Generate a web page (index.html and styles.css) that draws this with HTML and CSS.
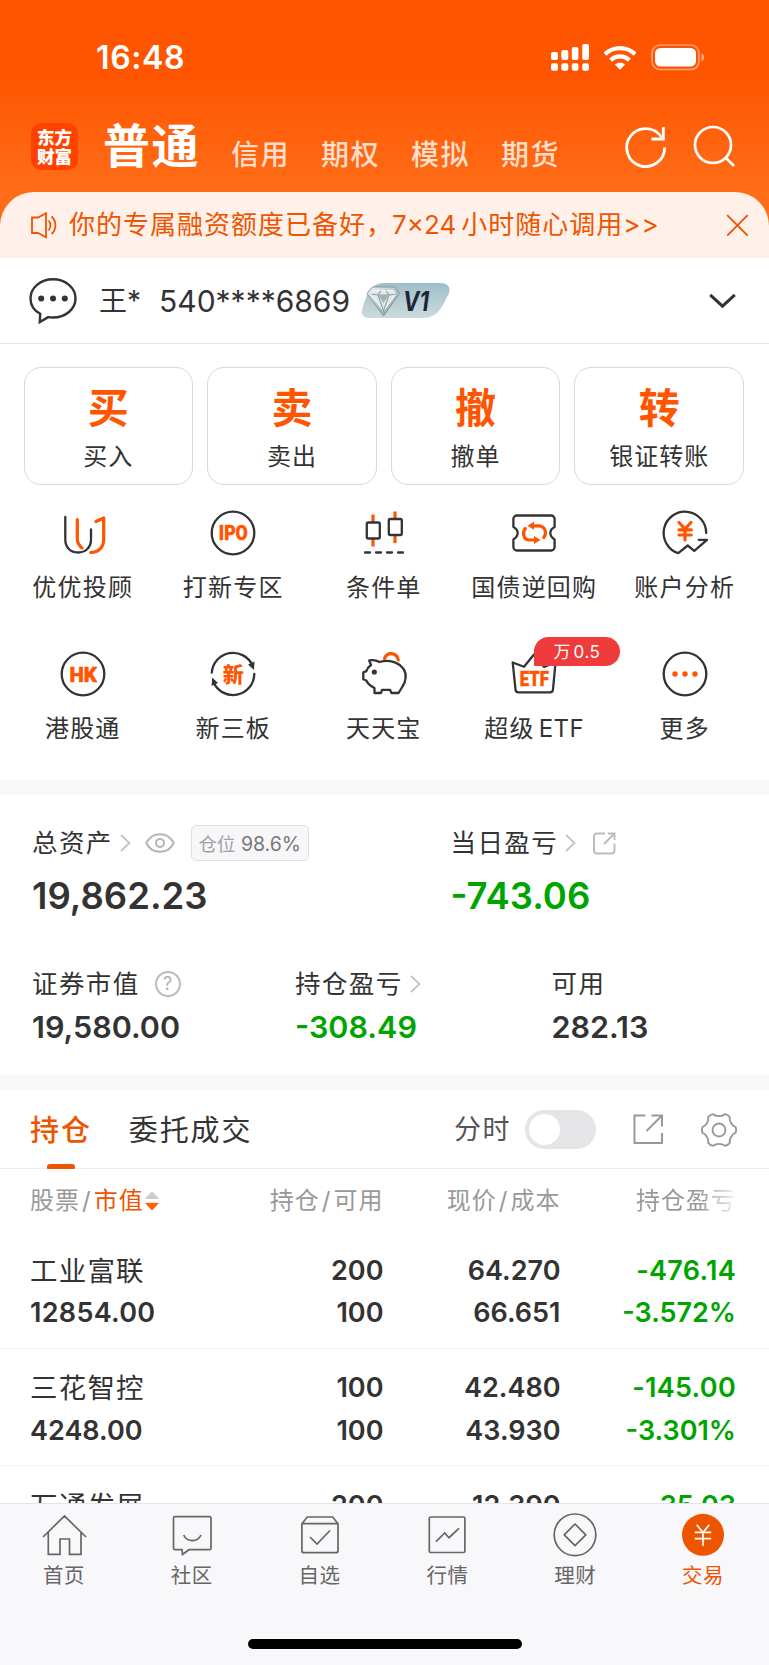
FILE: index.html
```html
<!DOCTYPE html>
<html lang="zh-CN">
<head>
<meta charset="utf-8">
<title>交易</title>
<link rel="stylesheet" href="styles.css">
</head>
<body>
<div class="app">
  <header class="top">
    <div class="status">
      <span class="clock">16:48</span>
      <div class="status-icons">
        <svg class="signal" width="39" height="28" viewBox="0 0 39 28" fill="#fff"><rect x="0" y="8" width="7" height="8" rx="2"/><rect x="10.3" y="6" width="7" height="10" rx="2"/><rect x="20.8" y="3" width="6.6" height="13" rx="2"/><rect x="31.2" y="0" width="6.8" height="16" rx="2"/><rect x="0" y="19.3" width="7" height="7.5" rx="2"/><rect x="10.3" y="19.3" width="7" height="7.5" rx="2"/><rect x="20.8" y="19.3" width="6.6" height="7.5" rx="2"/><rect x="31.2" y="19.3" width="6.8" height="7.5" rx="2"/></svg>
        <svg class="wifi" width="34" height="26" viewBox="0 0 34 26"><g fill="none" stroke="#fff" stroke-width="4.3"><path d="M2 9.2C10.500 1.200 23.500 1.200 32 9.200"/><path d="M7.600 15.200C13 10.200 21 10.200 26.400 15.200"/></g><path d="M17 24.800l-5.200-5.200c3-2.500 7.400-2.500 10.400 0z" fill="#fff"/></svg>
        <svg class="battery" width="54" height="27" viewBox="0 0 54 27"><rect x="1" y="1" width="47" height="24.500" rx="8" fill="none" stroke="#fff" stroke-opacity=".45" stroke-width="1.600"/><rect x="4" y="4" width="41" height="18.500" rx="5.500" fill="#fff"/><path d="M50.500 9.500c3.600 1.200 3.600 6.600 0 7.800z" fill="#fff" fill-opacity=".5"/></svg>
      </div>
    </div>
    <nav class="modes">
      <div class="logo"><span>东方</span><span>财富</span></div>
      <a class="mode mode-active">普通</a>
      <a class="mode">信用</a>
      <a class="mode">期权</a>
      <a class="mode">模拟</a>
      <a class="mode">期货</a>
      <div class="mode-tools">
        <svg width="42" height="44" viewBox="0 0 42 44" fill="none" stroke="#fff" stroke-width="2.800"><path d="M39.700 22.500A19 19 0 1 1 36.500 12"/><path d="M38.300 2V14H26.500"/></svg>
        <svg width="43" height="44" viewBox="0 0 43 44" fill="none" stroke="#fff" stroke-width="2.700"><circle cx="20" cy="20" r="18"/><path d="M32 32l9 9"/></svg>
      </div>
    </nav>
    <div class="notice">
      <svg class="speaker" width="27" height="27" viewBox="0 0 27 27" fill="none" stroke="#ed5500" stroke-width="1.800"><path d="M1 5.500h6L15 1.200v24L7 21H1z"/><path d="M17.500 8.500c2.600 2.800 2.600 7 0 9.800M20.500 4.500c5.200 4.500 5.200 13 0 17.500"/></svg>
      <span class="notice-text">你的专属融资额度已备好，<span class="notice-num">7×24</span>小时随心调用&gt;&gt;</span>
      <svg class="close" width="23" height="23" viewBox="0 0 23 23" stroke="#ed5500" stroke-width="1.900"><path d="M1.200 1.200l20.500 20.500M21.700 1.200L1.200 21.700"/></svg>
    </div>
  </header>

  <section class="account">
    <svg class="bubble" width="48" height="48" viewBox="0 0 48 48"><path d="M11.200 36.800C5 33.500 1.500 28 1.500 21.500C1.500 10.800 11.500 2.300 24 2.300S46.500 10.800 46.500 21.500S36.500 40.500 24 40.500c-1.700 0-3.300-.1-4.800-.4L10.800 45z" fill="none" stroke="#333" stroke-width="2.400"/><g fill="#333"><circle cx="12.200" cy="21.500" r="3"/><circle cx="24" cy="21.500" r="3"/><circle cx="35.800" cy="21.500" r="3"/></g></svg>
    <span class="owner">王*</span>
    <span class="acct-no">540****6869</span>
    <svg class="vip" width="90" height="37" viewBox="0 0 90 37">
      <defs><linearGradient id="vipBg" x1="0" y1="0" x2="0" y2="1"><stop offset="0" stop-color="#9dbfc8"/><stop offset="1" stop-color="#cddadf"/></linearGradient><linearGradient id="gem" x1="0" y1="0" x2="1" y2="1"><stop offset="0" stop-color="#f4f8f9"/><stop offset=".5" stop-color="#b9c5c9"/><stop offset="1" stop-color="#7f8d92"/></linearGradient></defs>
      <path d="M24 1H80C87 1 90.500 6 87.500 12.500L82.500 22C77.500 31.500 72 36 61 36H8C1.500 36-.5 31.500 1.500 26L4.500 17C8 6 14 1 24 1z" fill="url(#vipBg)"/>
      <path d="M11.500 5H34L38.500 11.500L22.500 34L6 11.500z" fill="url(#gem)" stroke="#87959a" stroke-width="1"/>
      <path d="M14 8.500H32L35 12L22.500 29L9.800 12z" fill="#dfe8eb" stroke="#fff" stroke-width="1"/>
      <path d="M9.800 12L17 13L22.500 29L28 13L35 12M17 13L20 8.500M28 13L25 8.500M17 13H28" fill="none" stroke="#93a1a6" stroke-width="1.100"/>
      <path d="M17 13H28L22.500 21z" fill="#a5b1b6"/>
      <text class="vip-text" x="42" y="28.500" textLength="26" lengthAdjust="spacingAndGlyphs">V1</text>
    </svg>
    <svg class="caret" width="27" height="16" viewBox="0 0 27 16" fill="none" stroke="#333" stroke-width="3"><path d="M1.200 1.800L13.500 13.200L25.800 1.800"/></svg>
  </section>

  <section class="actions">
    <div class="action"><b>买</b><span>买入</span></div>
    <div class="action"><b>卖</b><span>卖出</span></div>
    <div class="action"><b>撤</b><span>撤单</span></div>
    <div class="action"><b>转</b><span>银证转账</span></div>
  </section>

  <section class="tools">
    <div class="tool">
      <svg class="ic" viewBox="0 0 44 44"><path class="d" d="M4.300 6V28.500C4.300 36.500 9.500 41.500 17 41.500S30 36.500 30 28.500V18.500"/><path class="o" d="M16.300 8.500V27.500C16.300 32.500 18.300 34.800 21 37M35 10.500L42.700 7V28C42.700 36.500 37.500 41.500 29.800 41.500"/></svg>
      <span>优优投顾</span>
    </div>
    <div class="tool">
      <svg class="ic" viewBox="0 0 44 44"><circle class="d" cx="22" cy="22" r="21.300"/><text class="ic-text" x="22.300" y="29.300" textLength="29" lengthAdjust="spacingAndGlyphs">IPO</text></svg>
      <span>打新专区</span>
    </div>
    <div class="tool">
      <svg class="ic" viewBox="0 0 44 44"><path class="o butt" d="M11 3.500V11M11 28V35.500M33 .5V8M33 24.500V32"/><rect class="d" x="4.800" y="11.500" width="13" height="16" rx="1.500"/><rect class="d" x="26.800" y="8" width="13" height="16" rx="1.500"/><path class="d" d="M3 41.500h5M14 41.500h5M25 41.500h5M36 41.500h5"/></svg>
      <span>条件单</span>
    </div>
    <div class="tool">
      <svg class="ic" viewBox="0 0 44 44"><path class="d" d="M5 4.500H39A3.500 3.500 0 0 1 42.600 8V16C36.900 19 36.900 25 42.600 28.500V36A3.500 3.500 0 0 1 39 39.500H5A3.500 3.500 0 0 1 1.400 36V28.500C7.100 25 7.100 19 1.400 16V8A3.500 3.500 0 0 1 5 4.500z"/><path class="o" d="M13.300 17.500C10 22 11.500 29 17.500 29H22M31.800 26.500C35.500 21 32.500 14.800 26.500 14.800H22"/><path d="M22 25V33L28.500 29zM22 18.800V10.800L15.500 14.800z" fill="#ff5500"/></svg>
      <span>国债逆回购</span>
    </div>
    <div class="tool">
      <svg class="ic" viewBox="0 0 44 44"><path class="d" d="M43.200 22A21.300 21.300 0 1 0 15.300 42.200L24.700 34.500L31.300 39.800L44 28.800H35.700"/><path class="o" d="M16 11.500L22 18L28 11.500M22 18V29M16 18.800H28.300M16 24H28.300"/></svg>
      <span>账户分析</span>
    </div>
    <div class="tool">
      <svg class="ic" viewBox="0 0 44 44"><circle class="d" cx="22" cy="22" r="21.300"/><text class="ic-text" x="22.200" y="29.500" textLength="27.500" lengthAdjust="spacingAndGlyphs">HK</text></svg>
      <span>港股通</span>
    </div>
    <div class="tool">
      <svg class="ic" viewBox="0 0 44 44"><path class="d" d="M.8 20.500A21.300 21.300 0 0 1 41.500 13.500M43.300 22A21.300 21.300 0 0 1 2.500 30.300"/><path d="M43.500 9.500L43 18L37 12.500zM.6 34L1.200 25.500L7 31z" fill="#333"/><text class="ic-cn" x="22.300" y="30">新</text></svg>
      <span>新三板</span>
    </div>
    <div class="tool">
      <svg class="ic" viewBox="0 0 44 44"><path class="o" d="M22.500 6.500C25 -.2 34.500 -.2 36.300 8"/><path class="d" d="M7.200 8.500C11 7.800 14.500 8.300 17.500 10C22 8.800 29 8.700 33.500 10.600C40 13.200 44.500 19 43.600 26C43.200 30 42 32.500 40.500 34.500L36.500 41H29.500L28 37.800H20L19 41H12.500V36C8.500 34 5.500 31.500 4.300 28.500L1.300 27.200V20.300L4.300 19.200C5 16.500 7 14.500 9 13z"/><circle cx="12.300" cy="20" r="2.600" fill="#333"/></svg>
      <span>天天宝</span>
    </div>
    <div class="tool">
      <svg class="ic" viewBox="0 0 44 44"><path class="d" d="M.7 10.500L12 14.800L22 2.500L32 14.800L43.500 10.500L41 37.500A3 3 0 0 1 38 40.300H6.500A3 3 0 0 1 3.500 37.500z"/><text class="ic-text" x="22.300" y="33.500" textLength="29" lengthAdjust="spacingAndGlyphs">ETF</text></svg>
      <i class="tag-hot">万<em>0.5</em></i>
      <span>超级<em class="lat">ETF</em></span>
    </div>
    <div class="tool">
      <svg class="ic" viewBox="0 0 44 44"><circle class="d" cx="22" cy="22" r="21.300"/><g fill="#ff5500"><circle cx="12" cy="22" r="2.700"/><circle cx="22" cy="22" r="2.700"/><circle cx="32" cy="22" r="2.700"/></g></svg>
      <span>更多</span>
    </div>
  </section>

  <section class="assets">
    <div class="asset-main">
      <div class="cell">
        <div class="label">总资产<svg class="go" viewBox="0 0 11 18"><path d="M1 1l8.500 8L1 17"/></svg>
          <svg class="eye" width="30" height="20" viewBox="0 0 30 20" fill="none" stroke="#b5b5b5" stroke-width="2"><path d="M1.200 10C7.500-1.800 22.500-1.800 28.800 10C22.500 21.800 7.500 21.800 1.200 10z"/><circle cx="15" cy="10" r="4"/></svg>
          <span class="ratio"><span>仓位</span> 98.6%</span></div>
        <div class="big">19,862.23</div>
      </div>
      <div class="cell">
        <div class="label">当日盈亏<svg class="go" viewBox="0 0 11 18"><path d="M1 1l8.500 8L1 17"/></svg>
          <svg class="share-sm" width="23" height="23" viewBox="0 0 23 23" fill="none" stroke="#bbb" stroke-width="1.900"><path d="M12 1.500H4A3 3 0 0 0 1 4.500V18.500A3 3 0 0 0 4 21.500H18.500A3 3 0 0 0 21.500 18.500V11.500M11 12L21 2M14.800 1.500H21.500V8"/></svg></div>
        <div class="big down">-743.06</div>
      </div>
    </div>
    <div class="asset-sub">
      <div class="cell">
        <div class="label">证券市值<span class="help">?</span></div>
        <div class="mid">19,580.00</div>
      </div>
      <div class="cell">
        <div class="label">持仓盈亏<svg class="go" viewBox="0 0 11 18"><path d="M1 1l8.500 8L1 17"/></svg></div>
        <div class="mid down">-308.49</div>
      </div>
      <div class="cell">
        <div class="label">可用</div>
        <div class="mid">282.13</div>
      </div>
    </div>
  </section>

  <section class="holdings">
    <div class="tabs">
      <a class="tab tab-on">持仓</a>
      <a class="tab">委托成交</a>
      <div class="tab-tools">
        <span class="intraday">分时</span>
        <span class="switch"></span>
        <svg class="share" width="31" height="31" viewBox="0 0 31 31" fill="none" stroke="#999" stroke-width="2"><path d="M12.500 1.500H1.500V29H29V19M13.500 17L28.500 2M18.500 1.500H29V12.500"/></svg>
        <svg class="gear" width="36" height="36" viewBox="-19 -19 38 38" fill="none" stroke="#999" stroke-width="2"><path d="M17.500 3.100C13.500 4.400 10.600 9.500 11.400 13.600Q9.400 16.300 6.100 16.700C3 13.900-3 13.900-6.100 16.700Q-9.400 16.300-11.400 13.600C-10.600 9.500-13.500 4.400-17.500 3.100Q-18.800 0-17.500-3.100C-13.500-4.400-10.600-9.500-11.400-13.600Q-9.400-16.300-6.100-16.700C-3-13.900 3-13.900 6.100-16.700Q9.400-16.300 11.400-13.600C10.600-9.500 13.500-4.400 17.500-3.100Q18.800 0 17.500 3.100z"/><circle r="6.800"/></svg>
      </div>
    </div>
    <div class="row head">
      <div>股票<i>/</i><span class="sorted">市值</span><svg class="sort" width="16" height="22" viewBox="0 0 16 22"><path d="M8 1.800L14.200 8.500H1.800z" fill="#ccc" stroke="#ccc" stroke-linejoin="round"/><path d="M8 20L14.200 13.300H1.800z" fill="#ff6010" stroke="#ff6010" stroke-linejoin="round"/></svg></div>
      <div>持仓<i>/</i>可用</div>
      <div>现价<i>/</i>成本</div>
      <div class="fade">持仓盈亏</div>
    </div>
    <div class="row">
      <div><span class="name">工业富联</span><span class="value">12854.00</span></div>
      <div><span>200</span><span>100</span></div>
      <div><span>64.270</span><span>66.651</span></div>
      <div class="down"><span class="value">-476.14</span><span>-3.572%</span></div>
    </div>
    <div class="row">
      <div><span class="name">三花智控</span><span>4248.00</span></div>
      <div><span>100</span><span>100</span></div>
      <div><span>42.480</span><span>43.930</span></div>
      <div class="down"><span class="value">-145.00</span><span>-3.301%</span></div>
    </div>
    <div class="row">
      <div><span class="name">万通发展</span></div>
      <div><span>200</span></div>
      <div><span>12.390</span></div>
      <div class="down"><span>-35.03</span></div>
    </div>
  </section>

  <footer class="bottom">
    <nav class="nav">
      <a><svg viewBox="0 0 44 44"><path d="M1 24L22.500 3L44 24M6.300 19.500V41.300H18V26H27.500V41.300H39V19.500"/></svg><span>首页</span></a>
      <a><svg viewBox="0 0 44 44"><path d="M5 3.700H39.500A1.500 1.500 0 0 1 41 5.200V35.200A1.500 1.500 0 0 1 39.500 36.700H19L12.500 41.500L12 36.700H5A1.500 1.500 0 0 1 3.500 35.200V5.200A1.500 1.500 0 0 1 5 3.700zM13.700 22C17 29.500 27.700 29.500 31 22"/></svg><span>社区</span></a>
      <a><svg viewBox="0 0 44 44"><path d="M3.900 10.700L9.300 4H34.700L40 10.700V37.700A2 2 0 0 1 38 39.700H5.900A2 2 0 0 1 3.900 37.700zH40M12 24L19 31L32 17.500"/></svg><span>自选</span></a>
      <a><svg viewBox="0 0 44 44"><rect x="4.300" y="4" width="35.600" height="35.500" rx="1.500"/><path d="M11 28.700L19.700 20L24 24.700L34 15.300"/></svg><span>行情</span></a>
      <a><svg viewBox="0 0 44 44"><circle cx="22" cy="21.800" r="20.800"/><path d="M22 11L32.800 21.800L22 32.600L11.200 21.800z" stroke-linejoin="round"/></svg><span>理财</span></a>
      <a class="nav-on"><svg viewBox="0 0 44 44"><circle cx="22" cy="21.800" r="21" fill="#ed5500" stroke="none"/><path stroke="#fff" d="M15.700 11.700L22 19.500L28.300 11.700M22 19.500V32.700M13.800 19.300H30.200M13.800 25.700H30.200"/></svg><span>交易</span></a>
    </nav>
    <div class="home-bar"></div>
  </footer>
</div>
</body>
</html>
```
FILE: styles.css
```css
* { box-sizing: border-box; }
body {
  margin: 0;
  background: #fff;
  color: #333;
  font-family: Inter, "Noto Sans CJK SC", sans-serif;
}
i, em { font-style: normal; }
svg { display: block; flex: none; overflow: visible; }
.app {
  width: 769px;
  height: 1665px;
  display: flex;
  flex-direction: column;
  overflow: hidden;
}

/* header */
.top {
  height: 258px;
  flex: none;
  background: linear-gradient(#ff5500 0, #ff5500 75px, #ff6d18 190px, #ff6d18 100%);
}
.status {
  height: 115px;
  padding: 0 64px 0 96px;
  display: flex;
  align-items: center;
  justify-content: space-between;
}
.clock { color: #fff; font-size: 32px; font-weight: 600; letter-spacing: 0.600px; line-height: 40px; }
.status-icons { display: flex; align-items: center; }
.wifi { margin-left: 13px; }
.battery { margin-left: 14px; }
.modes {
  height: 76.500px;
  padding: 0 33px 0 31px;
  display: flex;
  align-items: flex-start;
}
.logo {
  width: 47px;
  height: 47px;
  margin: 8px 25px 0 0;
  padding-top: 5px;
  border-radius: 10px;
  background: #ff4200;
  display: flex;
  flex-direction: column;
  align-items: center;
  color: #fff;
  font-size: 17.500px;
  font-weight: 900;
  line-height: 19px;
}
.mode {
  margin: 24px 31px 0 0;
  color: #ffdfcc;
  font-size: 28px;
  font-weight: 500;
  letter-spacing: 1.500px;
  line-height: 32px;
}
.mode-active {
  margin: 3px 31px 0 0;
  color: #fff;
  font-size: 47px;
  font-weight: 700;
  letter-spacing: 1.500px;
  line-height: 56px;
}
.mode-tools { margin: 10px 0 0 auto; display: flex; gap: 26px; }
.notice {
  height: 66.500px;
  padding: 1px 20px 0 31px;
  display: flex;
  align-items: center;
  border-radius: 34px 34px 0 0;
  background: #fff1ea;
  color: #ed5500;
}
.notice-text { margin-left: 11px; font-size: 26px; letter-spacing: 1px; line-height: 32px; white-space: nowrap; }
.notice-num { margin: 0 5px 0 -1px; letter-spacing: 0; }
.close { margin-left: auto; }

/* account */
.account {
  height: 86px;
  flex: none;
  padding: 0 33px 0 29px;
  display: flex;
  align-items: center;
  border-bottom: 1px solid #e6e6e6;
}
.owner { margin-left: 22px; font-size: 28px; line-height: 36px; }
.acct-no { margin-left: 18px; font-size: 30px; line-height: 36px; }
.vip { margin-left: 11px; }
.vip-text { font-size: 27px; font-weight: 700; font-style: italic; font-family: Inter, sans-serif; fill: #1f2438; }
.caret { margin-left: auto; }

/* action cards */
.actions {
  flex: none;
  padding: 23px 25px 0 23.500px;
  display: grid;
  grid-template-columns: repeat(4, 1fr);
  gap: 14px;
}
.action {
  height: 118px;
  padding-top: 13.500px;
  border: 1.500px solid #d9d9d9;
  border-radius: 17px;
  display: flex;
  flex-direction: column;
  align-items: center;
}
.action b { color: #ff5500; font-size: 41px; font-weight: 700; line-height: 52px; }
.action span { margin-top: 6.500px; font-size: 24px; letter-spacing: 1px; line-height: 34px; }

/* tool grid */
.tools {
  flex: none;
  height: 295px;
  padding: 26px 9px 0 7.500px;
  display: grid;
  grid-template-columns: repeat(5, 1fr);
  grid-auto-rows: 141px;
}
.tool { position: relative; display: flex; flex-direction: column; align-items: center; }
.tool > span { margin-top: 16px; font-size: 24px; letter-spacing: 1.200px; line-height: 34px; white-space: nowrap; }
.lat { margin-left: 4px; letter-spacing: 0.500px; }
.ic { width: 44px; height: 44px; }
.ic .d { fill: none; stroke: #333; stroke-width: 2.300; stroke-linejoin: round; stroke-linecap: round; }
.ic .o { fill: none; stroke: #ff5500; stroke-width: 3.200; stroke-linejoin: round; stroke-linecap: round; }
.ic .butt { stroke-linecap: butt; }
.ic-text { font: 900 20.500px Roboto, sans-serif; fill: #ff5500; stroke: #ff5500; stroke-width: 0.500; stroke-linejoin: round; text-anchor: middle; }
.ic-cn { font: 900 21px "Noto Sans CJK SC", sans-serif; fill: #ff5500; text-anchor: middle; }
.tag-hot {
  position: absolute;
  left: 75px;
  top: -15px;
  width: 86px;
  height: 29px;
  border-radius: 15px 15px 15px 0;
  background: #ee3b3c;
  color: #fff;
  font-size: 17px;
  line-height: 30px;
  text-align: center;
}
.tag-hot em { margin-left: 3px; letter-spacing: 0.500px; }

/* assets */
.assets {
  flex: none;
  height: 310px;
  border-top: 15px solid #f6f8fa;
  border-bottom: 15px solid #f6f8fa;
  padding-top: 28px;
}
.asset-main { height: 140.500px; display: grid; grid-template-columns: 418.500px 1fr; padding-left: 32px; }
.asset-sub { display: grid; grid-template-columns: 263px 256.500px 1fr; padding-left: 32px; }
.label { height: 40px; display: flex; align-items: center; font-size: 25.500px; letter-spacing: 1.400px; line-height: 34px; }
.go { width: 11px; height: 18px; margin-left: 7px; fill: none; stroke: #c4c4c4; stroke-width: 1.800; }
.eye { margin-left: 14px; }
.share-sm { margin-left: 17px; }
.ratio {
  margin-left: 16px;
  width: 118px;
  height: 36px;
  border: 1px solid #e0e0e4;
  border-radius: 5px;
  background: #f7f7fa;
  color: #777;
  font-size: 19.500px;
  letter-spacing: 0;
  line-height: 36px;
  text-align: center;
  white-space: nowrap;
}
.ratio span { color: #a0a0a0; font-size: 18.500px; }
.big { margin-top: 10px; font-size: 36.500px; font-weight: 600; line-height: 46px; }
.mid { margin-top: 3.500px; font-size: 30.500px; font-weight: 600; line-height: 40px; }
.help {
  width: 26px;
  height: 26px;
  margin-left: 15px;
  border: 2px solid #bbb;
  border-radius: 50%;
  color: #b0b0b0;
  font-size: 18px;
  letter-spacing: 0;
  line-height: 22px;
  text-align: center;
}
.down { color: #00a400; }

/* holdings */
.holdings { flex: 1; min-height: 0; overflow: hidden; }
.tabs {
  height: 79px;
  padding: 1px 31px 0 30px;
  display: flex;
  align-items: center;
  border-bottom: 1px solid #eee;
}
.tab { margin-right: 37px; padding-top: 1px; font-size: 29px; letter-spacing: 1.900px; line-height: 77px; }
.tab-on { position: relative; color: #ed5500; font-weight: 500; }
.tab-on::after {
  content: "";
  position: absolute;
  left: 17px;
  bottom: 0;
  width: 28px;
  height: 5px;
  border-radius: 3px 3px 1px 1px;
  background: #ed5500;
}
.tab-tools { margin-left: auto; display: flex; align-items: center; }
.intraday { padding-top: 1px; color: #555; font-size: 27px; letter-spacing: 1.500px; line-height: 36px; }
.switch {
  width: 71px;
  height: 39px;
  margin-left: 14px;
  padding: 4px;
  border-radius: 20px;
  background: #e5e5e7;
}
.switch::before { content: ""; display: block; width: 31px; height: 31px; border-radius: 50%; background: #fff; }
.share { margin-left: 37px; }
.gear { margin: 0 1px 0 37px; }
.row {
  height: 117.500px;
  padding: 18.500px 33px 0 30px;
  display: grid;
  grid-template-columns: 176.500px 177px 177px 175.500px;
  border-bottom: 1.500px solid #f3f3f3;
  font-size: 27px;
  font-weight: 600;
}
.row > div { display: flex; flex-direction: column; text-align: right; }
.row > div:first-child { text-align: left; }
.row span { line-height: 42.500px; }
.row .value { letter-spacing: 0.300px; }
.row .name { font-size: 27.500px; font-weight: 400; letter-spacing: 1.200px; }
.head {
  height: 62px;
  padding-top: 1px;
  border: 0;
  color: #999;
  font-size: 24px;
  font-weight: 400;
  letter-spacing: 1px;
  line-height: 62px;
}
.row.head > div { flex-direction: row; align-items: center; justify-content: flex-end; }
.row.head > div:first-child { justify-content: flex-start; }
.head i { margin: 0 2px; }
.head .sorted { color: #ed5500; line-height: 62px; }
.row.head .fade {
  -webkit-mask-image: linear-gradient(90deg, #000 138px, rgba(0, 0, 0, 0.150) 174px);
  mask-image: linear-gradient(90deg, #000 138px, rgba(0, 0, 0, 0.150) 174px);
}

/* bottom navigation */
.bottom {
  height: 162px;
  flex: none;
  border-top: 1.500px solid #e4e4e8;
  background: #f8f8fb;
  display: flex;
  flex-direction: column;
  align-items: center;
}
.nav { width: 767px; height: 135px; align-self: flex-start; padding-top: 8.500px; display: grid; grid-template-columns: repeat(6, 1fr); }
.nav a { display: flex; flex-direction: column; align-items: center; color: #666; }
.nav svg { width: 44px; height: 44px; fill: none; stroke: #666; stroke-width: 1.700; }
.nav span { margin-top: 4.500px; font-size: 20.500px; letter-spacing: 0.500px; line-height: 30px; }
.nav .nav-on { color: #ed5500; }
.home-bar { width: 274px; height: 10px; border-radius: 5px; background: #000; }
```
